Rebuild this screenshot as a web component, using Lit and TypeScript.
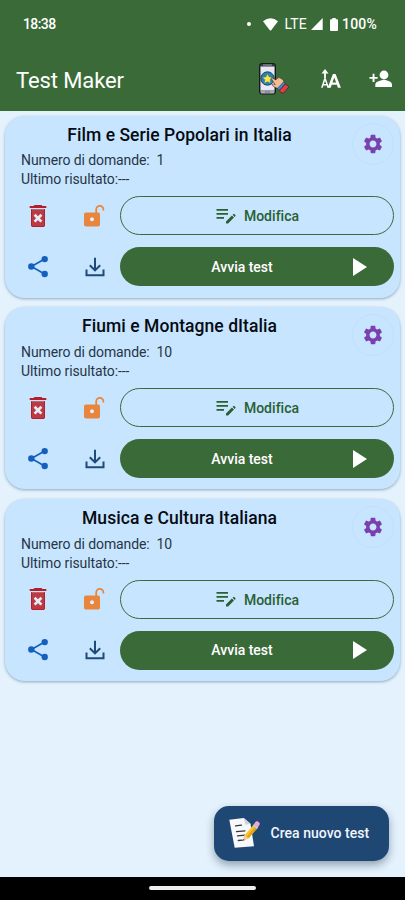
import { LitElement, html, css, svg } from "lit";
import { customElement, property } from "lit/decorators.js";

const gearPath =
  "M19.43 12.98c.04-.32.07-.64.07-.98s-.03-.66-.07-.98l2.11-1.65c.19-.15.24-.42.12-.64l-2-3.46c-.12-.22-.39-.3-.61-.22l-2.49 1c-.52-.4-1.08-.73-1.69-.98l-.38-2.65C14.46 2.18 14.25 2 14 2h-4c-.25 0-.46.18-.49.42l-.38 2.65c-.61.25-1.17.59-1.69.98l-2.49-1c-.23-.09-.49 0-.61.22l-2 3.46c-.13.22-.07.49.12.64l2.11 1.65c-.04.32-.07.65-.07.98s.03.66.07.98l-2.11 1.65c-.19.15-.24.42-.12.64l2 3.46c.12.22.39.3.61.22l2.49-1c.52.4 1.08.73 1.69.98l.38 2.65c.03.24.24.42.49.42h4c.25 0 .46-.18.49-.42l.38-2.65c.61-.25 1.17-.59 1.69-.98l2.49 1c.23.09.49 0 .61-.22l2-3.46c.12-.22.07-.49-.12-.64l-2.11-1.65zM12 15.800c-2.100 0-3.800-1.700-3.800-3.800s1.700-3.800 3.800-3.800 3.800 1.700 3.800 3.800-1.700 3.800-3.800 3.800z";

const trash = svg`<svg width="18" height="24" viewBox="0 0 18 24">
  <path d="M5.500 1h7l1 1H17.300v2H.7V2h3.800z" fill="#b3202a"/>
  <path d="M2 5.300h14V21a2 2 0 0 1-2 2H4a2 2 0 0 1-2-2z" fill="#bd3a42"/>
  <path d="M2.500 5.300V21A1.500 1.500 0 0 0 4 22.500h10a1.500 1.500 0 0 0 1.500-1.500V5.300" fill="none" stroke="#b3202a"/>
  <path d="M5.600 10.700l6.800 6.900M12.400 10.700l-6.800 6.900" stroke="#e3edf9" stroke-width="2.700"/>
</svg>`;

const lock = svg`<svg width="22" height="24" viewBox="0 0 22 24">
  <rect x="1" y="8.500" width="16" height="14" rx="1.800" fill="#e8863e"/>
  <circle cx="9" cy="15.300" r="2" fill="#e3edf9"/>
  <path d="M13.200 9V5.500a3.600 3.600 0 0 1 7.200 0v1" fill="none" stroke="#e8863e" stroke-width="1.800"/>
</svg>`;

const share = svg`<svg width="22" height="24" viewBox="0 0 22 24">
  <path d="M17.600 4L4.400 11.500l13.200 7.600" fill="none" stroke="#1560bd" stroke-width="1.700"/>
  <circle cx="17.700" cy="4.100" r="3.200" fill="#1560bd"/>
  <circle cx="4.300" cy="11.500" r="3.200" fill="#1560bd"/>
  <circle cx="17.700" cy="19" r="3.200" fill="#1560bd"/>
</svg>`;

const download = svg`<svg width="20" height="20" viewBox="0 0 20 20" fill="none" stroke="#1f4a78" stroke-width="2">
  <path d="M1.500 12.500v5.700h17v-5.700M10 .7v12.500M4.800 8.200l5.200 5.200 5.200-5.200"/>
</svg>`;

const editNote = svg`<svg width="20" height="18" viewBox="0 0 20 18" fill="#286032">
  <path d="M.5 2h11.500v1.800H.5zM.5 6h11.500v1.800H.5zM.5 10h7.500v1.800H.5z"/>
  <path d="M10 14.400l5.900-5.900 2.100 2.100-5.900 5.900H10zM16.600 7.800l.8-.8q.5-.4.900 0l1.200 1.200q.4.500 0 .9l-.8.800z"/>
</svg>`;

const wifi = svg`<svg class="wifi" width="15" height="13" viewBox="0 0 15 13"><path d="M0 3.300Q7.500-2.600 15 3.300L8.200 12.200q-.7.800-1.400 0z" fill="#fff"/></svg>`;
const signal = svg`<svg class="signal" width="12" height="12" viewBox="0 0 12 12"><path d="M11.700 0v12H0z" fill="#fff"/></svg>`;
const battery = svg`<svg class="battery" width="8" height="13" viewBox="0 0 8 13"><path d="M2.300 0h3.400v1.200H7q1 0 1 1V12q0 1-1 1H1q-1 0-1-1V2.200q0-1 1-1h1.300z" fill="#fff"/></svg>`;

const phone = svg`<svg class="phone" width="32" height="34" viewBox="0 0 32 34">
  <rect x="1.500" y="1.500" width="16" height="30.500" rx="2" fill="#303943" stroke="#15191b"/>
  <path d="M2.500 4.500h14v24h-14z" fill="#e9e7f3"/>
  <path d="M2.500 28.500h14V30a1.500 1.500 0 0 1-1.500 1.500H4A1.500 1.500 0 0 1 2.500 30z" fill="#a8a9b3"/>
  <path d="M5 3h9" stroke="#8d909b" stroke-width="1.200"/>
  <path d="M7 30h5" stroke="#737780" stroke-width="1"/>
  <circle cx="9.500" cy="16.500" r="6.700" fill="#2583b5" stroke="#173b4c" stroke-width=".9"/>
  <path d="M9.500 12l1.500 2.900 3.200.5-2.200 2.300.4 3.200-2.900-1.400-2.900 1.400.4-3.200-2.200-2.300 3.200-.5z" fill="#ffe646" stroke="#8a8626" stroke-width=".3"/>
  <path d="M13 16.200c1-.8 2.100.2 4.800 1.800 1.500-2 3-3 4.300-2 2.700 1 4.200 3 4 6l-4.200 4.800c-3-.4-5-1-7.400-3.200-1-1.200.4-2 1.700-1.300l1 .4z" fill="#f4bc90" stroke="#43332b" stroke-width=".6"/>
  <path d="M19.500 26.400l6-6.400 2.100 1.600-6 6.800z" fill="#378bd0" stroke="#1e3547" stroke-width=".6"/>
  <path d="M21.500 28.400l6-6.400 3.400 2.800-5.300 6.400q-3 .4-4.100-2.800z" fill="#e43d42" stroke="#392028" stroke-width=".7"/>
</svg>`;

const textSize = svg`<svg class="text-size" width="20" height="20" viewBox="0 0 20 20" fill="#fff">
  <path d="M4 0L7.500 4.500H4.900V9.500H3.100V4.500H.5z"/>
  <path d="M3.100 9.500h1.800L8 18.700H6.400l-.7-2.200H2.400l-.7 2.200H.1zM4 11.800l-1.100 3.300h2.300z" fill-rule="evenodd"/>
  <path d="M11.900 5h2.700l5.300 13.700h-3l-1-2.900h-5.200l-1 2.900H6.700zM13.300 8.500l-1.800 4.900h3.600z" fill-rule="evenodd"/>
</svg>`;

const addPerson = svg`<svg class="add-person" width="24" height="18" viewBox="0 0 24 18" fill="#fff">
  <circle cx="15" cy="5" r="4.400"/>
  <path d="M6.300 17v-2.300c0-3 5.800-4.600 8.700-4.600s8 1.600 8 4.600V17zM3.600 3.800h1.900v3.100h3.100v1.900H5.500V12H3.600V8.800H.5V6.900h3.100z"/>
</svg>`;

const memo = svg`<svg class="memo" width="32" height="32" viewBox="0 0 32 32">
  <path d="M.3 2.800L14.700.9 21.500 6.700l3.500 22.500-19.300 1.600z" fill="#f8f9fc"/>
  <path d="M14.700.9L16.500 7.700l5-1z" fill="#cbd5e1"/>
  <path d="M6.500 8.900l6-.7M7.500 14.700l8.500-.9M8.500 18.900l7.400-.8M9.300 23.500l4-.3" stroke="#34363c" stroke-width="1.300" stroke-linecap="round"/>
  <path d="M15.500 18.200l9.500-11 4 3.400-9.500 10.700-5.500 2.400z" fill="#f8c62d"/>
  <path d="M17.500 19.800L27 8.900l2 1.700-9.500 10.700z" fill="#e2a31a"/>
  <path d="M15.500 18.200l4 3.100-5.500 2.400z" fill="#efcea3"/>
  <path d="M14 23.700l.5-1.800 1.200 1z" fill="#25262b"/>
  <path d="M23.800 8.500l1.600-1.800 4 3.400-1.600 1.800z" fill="#c4cbd6"/>
  <path d="M25 7.100l1.800-2.500c1.200-1.500 5 1.200 3.900 3l-1.900 2.700z" fill="#eda5d2"/>
</svg>`;

@customElement("quiz-card")
class QuizCard extends LitElement {
  @property() name = "";
  @property({ type: Number }) questions = 0;

  static styles = css`
    :host {
      display: block;
      box-sizing: border-box;
      height: 182px;
      padding: 7.200px 6px 0 16px;
      border-radius: 20px;
      background: #c8e5ff;
      box-shadow: 0 1px 3px rgba(30, 60, 80, 0.4);
      color: #263645;
    }
    .head { display: flex; justify-content: space-between; height: 73.800px; }
    .info { width: 317px; }
    .title {
      margin: 0 0 4.800px;
      font-size: 17.500px;
      line-height: 24px;
      font-weight: 500;
      letter-spacing: 0.050px;
      text-align: center;
      white-space: nowrap;
      color: #050b12;
    }
    .line { font-size: 14px; line-height: 19px; letter-spacing: -0.100px; white-space: pre; }
    .gear {
      display: flex;
      align-items: center;
      justify-content: center;
      box-sizing: border-box;
      width: 42px;
      height: 42px;
      border: 1px solid #c0dff8;
      border-radius: 50%;
    }
    .actions {
      display: grid;
      grid-template-columns: 34px 65px 1fr;
      grid-template-rows: 39px 39px;
      row-gap: 12px;
    }
    .icon { display: flex; align-items: center; justify-content: center; }
    .second { padding-left: 15px; }
    .unlock { padding-left: 13px; }
    .button {
      display: flex;
      align-items: center;
      justify-content: center;
      box-sizing: border-box;
      border-radius: 20px;
      font-size: 14px;
      font-weight: 500;
    }
    .edit { gap: 8px; padding-left: 1px; border: 1px solid #3b6a39; color: #286032; letter-spacing: 0.030px; }
    .edit span { padding-top: 1px; }
    .start {
      display: grid;
      grid-template-columns: 27px 1fr 27px;
      padding-right: 14px;
      background: #3b6a39;
      color: #fff;
      text-align: center;
      letter-spacing: -0.020px;
    }
    .start span { grid-column: 2; padding-right: 16px; }
  `;

  render() {
    return html`
      <div class="head">
        <div class="info">
          <h2 class="title">${this.name}</h2>
          <div class="line">Numero di domande:  ${this.questions}</div>
          <div class="line">Ultimo risultato:---</div>
        </div>
        <div class="gear">
          <svg width="22" height="22" viewBox="0 0 24 24"><path d=${gearPath} fill="#7940ae" /></svg>
        </div>
      </div>
      <div class="actions">
        <div class="icon">${trash}</div>
        <div class="icon unlock">${lock}</div>
        <div class="button edit">${editNote}<span>Modifica</span></div>
        <div class="icon">${share}</div>
        <div class="icon second">${download}</div>
        <div class="button start">
          <span>Avvia test</span>
          <svg width="14" height="18" viewBox="0 0 14 18"><path d="M0 0l14 9-14 9z" fill="#fff" /></svg>
        </div>
      </div>
    `;
  }
}

@customElement("app-root")
class AppRoot extends LitElement {
  static styles = css`
    :host {
      display: flex;
      flex-direction: column;
      width: 405px;
      height: 900px;
      overflow: hidden;
      background: #e3f2fd;
      font-family: Roboto, sans-serif;
    }
    .header { height: 110.500px; flex: none; background: #3b6a39; color: #fff; }
    .status {
      display: flex;
      align-items: center;
      height: 48px;
      padding: 0 28px 0 23px;
      font-size: 14px;
    }
    .time { letter-spacing: -0.600px; margin-right: auto; font-weight: 500; }
    .dot { width: 4px; height: 4px; border-radius: 50%; background: #fff; margin-right: 12px; }
    .wifi { margin-right: 6px; }
    .lte { letter-spacing: 0.200px; margin-right: 4px; }
    .signal { margin-right: 7px; }
    .battery { margin-right: 4px; }
    .percent { letter-spacing: 0.200px; font-weight: 500; }
    .toolbar { display: flex; align-items: center; height: 62px; padding: 0 12px 0 16px; }
    h1 { margin: 0 auto 0 0; padding-top: 4px; font-size: 22px; line-height: 30px; font-weight: 400; letter-spacing: -0.100px; }
    .phone { margin-right: 31px; }
    .text-size { margin-right: 28px; }
    .list { display: flex; flex-direction: column; gap: 9.700px; padding: 5px 5px 0; }
    .bottom { display: flex; justify-content: flex-end; margin-top: auto; padding: 0 16px 16.500px 0; }
    .fab {
      display: flex;
      align-items: center;
      box-sizing: border-box;
      width: 175.500px;
      height: 55px;
      padding-left: 15px;
      border-radius: 15px;
      background: #1f4774;
      box-shadow: 0 4px 8px rgba(20, 40, 60, 0.4);
      color: #f1f6fd;
      font-size: 14px;
      font-weight: 500;
      letter-spacing: 0.030px;
    }
    .memo { margin-right: 10px; }
    .nav { display: flex; justify-content: center; height: 23px; flex: none; background: #000; }
    .handle { width: 107px; height: 4px; margin-top: 9px; border-radius: 2px; background: #eee; }
  `;

  render() {
    const quizzes = [
      { name: "Film e Serie Popolari in Italia", questions: 1 },
      { name: "Fiumi e Montagne dItalia", questions: 10 },
      { name: "Musica e Cultura Italiana", questions: 10 },
    ];
    return html`
      <header class="header">
        <div class="status">
          <span class="time">18:38</span>
          <span class="dot"></span>${wifi}<span class="lte">LTE</span>${signal}${battery}<span class="percent">100%</span>
        </div>
        <div class="toolbar"><h1>Test Maker</h1>${phone}${textSize}${addPerson}</div>
      </header>
      <main class="list">
        ${quizzes.map((q) => html`<quiz-card .name=${q.name} .questions=${q.questions}></quiz-card>`)}
      </main>
      <div class="bottom"><div class="fab">${memo}<span>Crea nuovo test</span></div></div>
      <div class="nav"><div class="handle"></div></div>
    `;
  }
}
